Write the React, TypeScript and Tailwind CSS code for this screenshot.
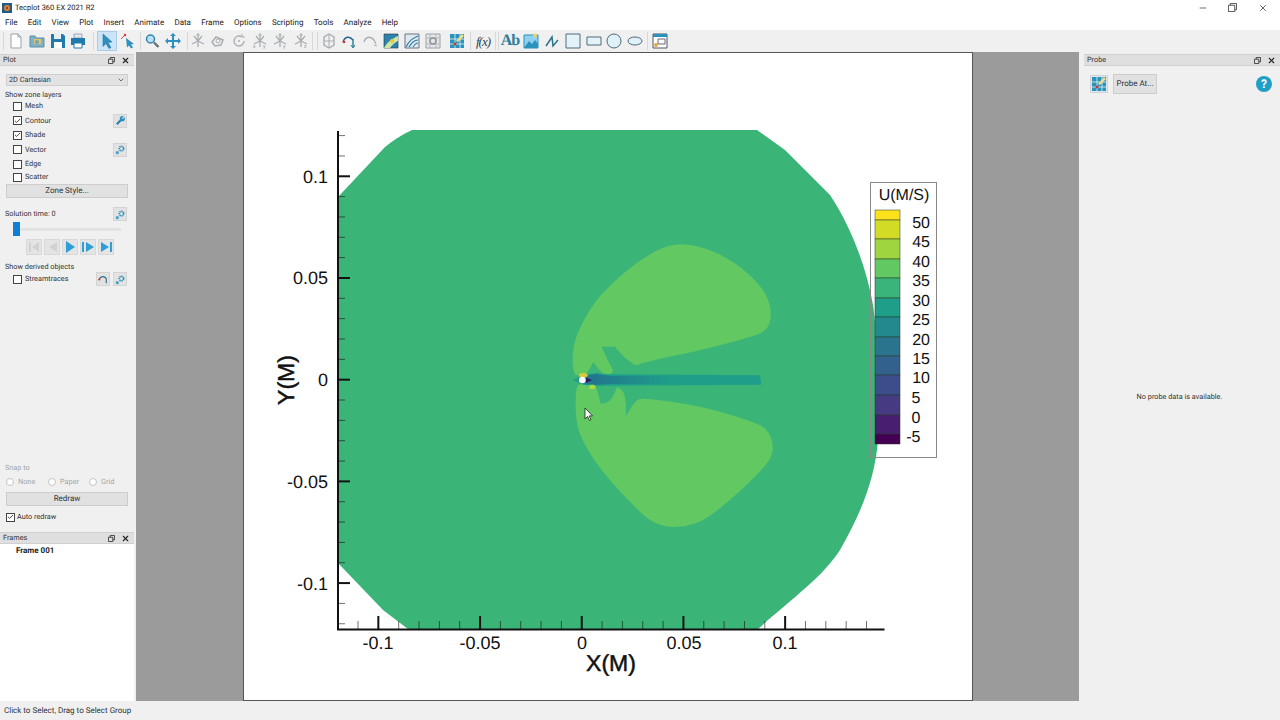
import { Minus, X, ChevronDown, Check } from 'lucide-react';

const MENUS = ['File', 'Edit', 'View', 'Plot', 'Insert', 'Animate', 'Data', 'Frame', 'Options', 'Scripting', 'Tools', 'Analyze', 'Help'];

const LEGEND = [
  { label: '50', color: '#fde11d', h: 10, x: 930 },
  { label: '45', color: '#d2dc27', h: 19, x: 930 },
  { label: '40', color: '#9fd53f', h: 20, x: 930 },
  { label: '35', color: '#62c862', h: 19, x: 930 },
  { label: '30', color: '#3ab47a', h: 20, x: 930 },
  { label: '25', color: '#1f9e89', h: 19, x: 930 },
  { label: '20', color: '#23898e', h: 20, x: 930 },
  { label: '15', color: '#2b748e', h: 19, x: 930 },
  { label: '10', color: '#33618d', h: 19, x: 930 },
  { label: '5', color: '#3b4e8b', h: 20, x: 920.5 },
  { label: '0', color: '#463a83', h: 20, x: 920.5 },
  { label: '-5', color: '#481f70', h: 19, x: 920.5 },
  { label: '', color: '#440154', h: 10, x: 0 },
];

const XMAJOR = [378.3, 480, 581.7, 683.4, 785];
const YMAJOR = [176.5, 278.2, 380, 481.7, 583.4];
const range = (count: number) => Array.from({ length: count }, (_, i) => i);

// closed curve through the midpoints of a point list; a doubled point gives a sharper corner
const smooth = (pts: number[][]) => {
  const mid = (a: number[], b: number[]) => `${(a[0] + b[0]) / 2} ${(a[1] + b[1]) / 2}`;
  let d = `M${mid(pts[pts.length - 1], pts[0])}`;
  pts.forEach((p, i) => {
    d += `Q${p[0]} ${p[1]} ${mid(p, pts[(i + 1) % pts.length])}`;
  });
  return d + 'Z';
};

const UPPER_LOBE = [
  [42, 436], [36, 385], [46, 320], [92, 232], [148, 166], [238, 90], [335, 38], [432, 50], [524, 96], [604, 166],
  [636, 235], [626, 300], [570, 322], [400, 366], [300, 385], [226, 406], [226, 406], [195, 385], [165, 350], [165, 350],
  [125, 350], [125, 350], [145, 395], [165, 430], [128, 434], [100, 395], [100, 395], [82, 432], [60, 436],
];
const LOWER_LOBE = [
  [48, 470], [46, 560], [62, 625], [118, 715], [198, 805], [288, 892], [402, 890], [484, 834], [574, 752], [630, 692],
  [642, 650], [624, 596], [560, 568], [420, 528], [248, 503], [226, 512], [198, 558], [198, 558], [196, 488], [172, 472],
  [172, 472], [150, 516], [122, 522], [122, 522], [110, 470], [90, 462], [60, 462],
];

// every toolbar drawing sits in a 16x16 box
const Glyph = ({ children }: { children: React.ReactNode }) => (
  <svg viewBox="0 0 16 16" className="w-4 h-4" fill="none">{children}</svg>
);

const Axes = ({ a, b }: { a: string; b?: string }) => (
  <Glyph>
    <path d="M8 8V1M8 8l6 3M8 8l-6 3M8 8l-4-5M8 8l4-5M8 8v6" stroke="#a9aeb2" strokeWidth="1.3" />
    <path d="M6.5 2.5L8 .5l1.5 2" stroke="#a9aeb2" />
    <text x="1" y="15" fontSize="5" fill="#8b9094">{a}</text>
    {b && <text x="11" y="15" fontSize="5" fill="#8b9094">{b}</text>}
  </Glyph>
);

const PROBE = (
  <Glyph>
    <path d="M1 1h14v14H1z" fill="#2a92bb" />
    <path d="M1 6h14M1 11h14M6 1v14M11 1v14" stroke="#e9f4f8" strokeWidth=".8" />
    <path d="M7 8l6-7 2 2-6 6z" fill="#efe08a" />
    <circle cx="6" cy="11" r="1.4" fill="#c33" />
  </Glyph>
);

type Tool = { x: number; w?: number; node?: React.ReactNode; active?: boolean };

// x is the centre of the item in the toolbar; items without a node are separators
const TOOLS: Tool[] = [
  { x: 3, w: 1 },
  { x: 16, node: <Glyph><path d="M3 1h7l3 3v11H3z" fill="#fff" stroke="#9aa3ab" /><path d="M10 1v3h3" stroke="#9aa3ab" /></Glyph> },
  { x: 37, node: <Glyph><path d="M1 3h5l1 2h8v9H1z" fill="#7fb2c9" stroke="#5b8ea5" /><path d="M5 6h7v5H5z" fill="#e5c266" /><circle cx="8" cy="9" r="2" fill="#6fa5c0" /></Glyph> },
  { x: 58, node: <Glyph><path d="M1 1h12l2 2v12H1z" fill="#1e7bab" /><path d="M4 1h7v5H4z" fill="#e6eef3" /><path d="M4 9h8v6H4z" fill="#fff" /></Glyph> },
  { x: 78, node: <Glyph><path d="M4 1h8v4H4z" fill="#dfe7ec" stroke="#668" strokeWidth=".5" /><path d="M1 5h14v7H1z" fill="#1e7bab" /><path d="M4 10h8v5H4z" fill="#fff" stroke="#1e7bab" /></Glyph> },
  { x: 93, w: 1 },
  { x: 107, active: true, node: <Glyph><path d="M4 1l9 8-4 .5 3 5-2 1-3-5-3 3z" fill="#2e8fc0" stroke="#1d6f99" strokeWidth=".5" /></Glyph> },
  { x: 128, node: <Glyph><path d="M6 5l8 6-3 .5 2 3-2 1-2-3-2 2z" fill="#2e8fc0" /><path d="M1 6l4-4" stroke="#c9506a" strokeWidth="1" /><circle cx="5" cy="2" r="1.2" fill="#d33" /></Glyph> },
  { x: 140, w: 1 },
  { x: 152, node: <Glyph><circle cx="6.5" cy="6" r="4" fill="#bfe0f0" stroke="#2c86b3" strokeWidth="1.5" /><path d="M10 9.5l4.5 4.5" stroke="#6a6f73" strokeWidth="2.4" /></Glyph> },
  { x: 173, node: <Glyph><path d="M8 0l3 3H9v4h4V5l3 3-3 3V9H9v4h2l-3 3-3-3h2V9H3v2L0 8l3-3v2h4V3H5z" fill="#2e8fc0" /></Glyph> },
  { x: 187, w: 1 },
  { x: 198, node: <Axes a="" /> },
  { x: 218, node: <Glyph><path d="M2 9l4-5 7 3-2 5-6 1z" stroke="#a9aeb2" strokeWidth="1.5" /><circle cx="8" cy="8" r="2" stroke="#a9aeb2" /></Glyph> },
  { x: 239, node: <Glyph><path d="M13 8a5 5 0 1 1-2-4" stroke="#a9aeb2" strokeWidth="1.4" /><path d="M11 1v3h3" stroke="#a9aeb2" /><circle cx="8" cy="8" r="1" fill="#a9aeb2" /></Glyph> },
  { x: 260, node: <Axes a="x" b="y" /> },
  { x: 280, node: <Axes a="" b="y" /> },
  { x: 301, node: <Axes a="" b="z" /> },
  { x: 312, w: 1 },
  { x: 317, w: 1 },
  { x: 329, node: <Glyph><path d="M8 1l5 3v8l-5 3-5-3V4z" stroke="#a9aeb2" strokeWidth="1.4" /><path d="M8 1v14M3 8h10" stroke="#a9aeb2" /></Glyph> },
  { x: 350, node: <Glyph><path d="M1 9c2-6 7-6 10-2" stroke="#27668a" strokeWidth="1.4" /><path d="M11 6v8" stroke="#1e7f8f" strokeWidth="1.4" /><path d="M9 12l2 3 2-3" stroke="#1e7f8f" /><circle cx="2" cy="9" r="1.3" fill="#d33" /></Glyph> },
  { x: 371, node: <Glyph><path d="M1 9c2-6 7-6 10-2l2 4" stroke="#a9aeb2" strokeWidth="1.4" /><path d="M11 12l3 1" stroke="#a9aeb2" /></Glyph> },
  { x: 391, node: <Glyph><path d="M1 1h14v14H1z" fill="#2b83ad" stroke="#234" strokeWidth=".6" /><path d="M1 15C5 8 9 6 15 3v5c-4 2-6 4-8 7z" fill="#cfe6a5" /><circle cx="9" cy="8" r="2" fill="#e9c93d" /></Glyph> },
  { x: 412, node: <Glyph><path d="M1 1h14v14H1z" fill="#dfe8ee" stroke="#345" strokeWidth=".7" /><path d="M2 14C6 6 10 5 14 3M5 14c3-5 6-7 9-7M9 14c2-3 3-4 5-4" stroke="#2b7ba6" strokeWidth="1.1" /></Glyph> },
  { x: 433, node: <Glyph><path d="M1 1h14v14H1z" stroke="#9ca2a6" fill="#e4e6e8" /><path d="M1 5h14M1 11h14M5 1v14M11 1v14" stroke="#b5babd" /><circle cx="8" cy="8" r="3" stroke="#8d9396" strokeWidth="1.4" /></Glyph> },
  { x: 457, node: PROBE },
  { x: 470, w: 1 },
  { x: 483, node: <span className="font-['Liberation_Serif',serif] italic text-[13px] text-[#345] leading-none whitespace-nowrap tracking-[-1px]">f(x)</span> },
  { x: 495, w: 1 },
  { x: 498, w: 1 },
  { x: 510, node: <span className="font-['Liberation_Serif',serif] font-bold text-[16px] text-[#2a7d9c] leading-none tracking-[-1px]">Ab</span> },
  { x: 531, node: <Glyph><path d="M1 2h14v13H1z" fill="#8fd0ee" stroke="#2b91bd" /><path d="M1 15l5-7 3 3 3-4 3 4v4z" fill="#2b91bd" /><circle cx="12" cy="2.5" r="2" fill="#e9d65c" /></Glyph> },
  { x: 552, node: <Glyph><path d="M2 13l6-9 1 9 5-6" stroke="#2a7287" strokeWidth="1.5" /></Glyph> },
  { x: 573, node: <Glyph><path d="M1 1h14v14H1z" fill="#e4f2f9" stroke="#4e6b78" strokeWidth="1" /></Glyph> },
  { x: 594, node: <Glyph><path d="M1 4h14v8H1z" fill="#e4f2f9" stroke="#4e6b78" strokeWidth="1" /></Glyph> },
  { x: 614, node: <Glyph><circle cx="8" cy="8" r="7" fill="#e0f1f9" stroke="#4e6b78" /></Glyph> },
  { x: 635, node: <Glyph><ellipse cx="8" cy="8" rx="7" ry="4" fill="#e0f1f9" stroke="#4e6b78" /></Glyph> },
  { x: 647, w: 1 },
  { x: 660, node: <Glyph><path d="M1 1h14v14H1z" fill="#fff" stroke="#556" /><path d="M1 1h14v3H1z" fill="#2a92bb" /><path d="M6 6h7v5H6z" stroke="#667" /><circle cx="4" cy="12" r="2" fill="#e3a93c" /></Glyph> },
];

const Toolbar = () => {
  let right = 0;
  return (
    <div className="h-[22px] flex items-center bg-[#f0f0f0]">
      {TOOLS.map(t => {
        const w = t.w ?? 20;
        const left = t.x - w / 2;
        const gap = left - right;
        right = left + w;
        return (
          <div
            key={t.x}
            style={{ marginLeft: gap, width: w }}
            className={`shrink-0 flex items-center justify-center ${t.node ? 'h-[20px]' : 'h-[18px] bg-[#d8d8d8]'} ${t.active ? 'bg-[#cce4f7] border border-[#a8cde8]' : ''}`}
          >
            {t.node}
          </div>
        );
      })}
    </div>
  );
};

const DockTitle = ({ title }: { title: string }) => (
  <div className="h-[12px] bg-[#dfdfdf] border-y border-[#d0d0d0] flex items-center pl-[3px] pr-[4px] text-[#333]">
    <span className="flex-1">{title}</span>
    <svg viewBox="0 0 8 8" className="w-[7px] h-[7px] mr-[6px]" fill="none" stroke="#333"><path d="M.5 2.5h5v5h-5zM2.5 2.5v-2h5v5h-2" /></svg>
    <X className="w-[9px] h-[9px] text-[#222]" strokeWidth={3} />
  </div>
);

const CheckRow = ({ label, on, h, children }: { label: string; on?: boolean; h: number; children?: React.ReactNode }) => (
  <div style={{ height: h }} className="flex items-center pl-[13px] pr-[7px]">
    <div className="w-[9px] h-[9px] bg-white border border-[#444] flex items-center justify-center">
      {on && <Check className="w-[8px] h-[8px] text-[#333]" strokeWidth={3} />}
    </div>
    <span className="ml-[3px] flex-1 text-[#333]">{label}</span>
    {children}
  </div>
);

const Gear = ({ wrench }: { wrench?: boolean }) => (
  <div className="w-[14px] h-[14px] bg-[#e2e2e2] border border-[#d4d4d4] flex items-center justify-center">
    <svg viewBox="0 0 12 12" className="w-[11px] h-[11px]" fill="none">
      {wrench ? (
        <>
          <path d="M2 10l5-5" stroke="#1f7fb0" strokeWidth="2.2" />
          <circle cx="8" cy="4" r="2.8" fill="#2f8fc0" />
          <path d="M8 4l3-3" stroke="#e2e2e2" strokeWidth="1.4" />
        </>
      ) : (
        <>
          <circle cx="7" cy="5" r="2.4" stroke="#2b93bb" strokeWidth="1.8" strokeDasharray="1.4 .6" />
          <circle cx="2.5" cy="9.5" r="1.8" fill="#4aa2c7" />
        </>
      )}
    </svg>
  </div>
);

const Player = ({ d, dim }: { d: string; dim?: boolean }) => (
  <div className="w-[16px] h-[16px] bg-[#e4e4e4] border border-[#d8d8d8] flex items-center justify-center">
    <svg viewBox="0 0 14 14" className="w-[14px] h-[14px]"><path d={d} fill={dim ? '#cfd2d4' : '#2e9ed6'} /></svg>
  </div>
);

const Radio = ({ label, w }: { label: string; w: number }) => (
  <div style={{ width: w }} className="flex items-center text-[#a4a4a4]">
    <span className="w-[8px] h-[8px] rounded-full bg-white border border-[#c4c4c4] mr-[4px]" />
    {label}
  </div>
);

const PlotPanel = () => (
  <div className="h-[479px] pt-[2px] flex flex-col">
    <DockTitle title="Plot" />
    <div className="mt-[8px] mx-[6px] h-[12px] bg-[#e2e2e2] border border-[#cfcfcf] flex items-center pl-[2px] pr-[2px] text-[#333]">
      <span className="flex-1">2D Cartesian</span>
      <ChevronDown className="w-[8px] h-[8px]" />
    </div>
    <div className="ml-[5px] mt-[4px] h-[9px] leading-[9px] text-[#333]">Show zone layers</div>
    <CheckRow label="Mesh" h={14} />
    <CheckRow label="Contour" on h={15}><Gear wrench /></CheckRow>
    <CheckRow label="Shade" on h={14} />
    <CheckRow label="Vector" h={15}><Gear /></CheckRow>
    <CheckRow label="Edge" h={14} />
    <CheckRow label="Scatter" h={12} />
    <div className="mt-[1px] mx-[6px] h-[14px] bg-[#e1e1e1] border border-[#cdcdcd] flex items-center justify-center text-[#333] text-[8px]">Zone Style...</div>
    <div className="mt-[9px] flex items-center pl-[5px] pr-[7px] h-[14px] text-[#333]">
      <span className="flex-1">Solution time: 0</span>
      <Gear />
    </div>
    <div className="relative mt-[1px] mx-[13px] h-[14px] flex items-center">
      <div className="w-full h-[3px] bg-[#e3e3e3]" />
      <div className="absolute left-0 top-0 w-[7px] h-[14px] bg-[#0f7fd6]" />
    </div>
    <div className="mt-[3px] ml-[26px] flex gap-[2px]">
      <Player dim d="M2 2h2v10H2zM12 2v10L5 7z" />
      <Player dim d="M12 2v10L4 7z" />
      <Player d="M3 1l9 6-9 6z" />
      <Player d="M1 2h2v10H1zM5 2l8 5-8 5z" />
      <Player d="M2 2l8 5-8 5zM11 2h2v10h-2z" />
    </div>
    <div className="ml-[5px] mt-[6px] h-[11px] leading-[11px] text-[#333]">Show derived objects</div>
    <CheckRow label="Streamtraces" h={14}>
      <div className="w-[14px] h-[14px] bg-[#e2e2e2] border border-[#d4d4d4] mr-[3px] flex items-center justify-center">
        <svg viewBox="0 0 12 12" className="w-[11px] h-[11px]" fill="none"><path d="M1 6c2-4 6-4 8-1v5" stroke="#2a6b80" strokeWidth="1.2" /><circle cx="1.5" cy="6" r="1.2" fill="#c33" /></svg>
      </div>
      <Gear />
    </CheckRow>
    <div className="flex-1" />
    <div className="ml-[5px] h-[11px] leading-[11px] text-[#a4a4a4]">Snap to</div>
    <div className="mt-[3px] ml-[6px] h-[12px] flex">
      <Radio label="None" w={42} />
      <Radio label="Paper" w={41} />
      <Radio label="Grid" w={40} />
    </div>
    <div className="mt-[4px] mx-[6px] h-[14px] bg-[#e1e1e1] border border-[#cdcdcd] flex items-center justify-center text-[#333] text-[8px]">Redraw</div>
    <div className="mt-[4px] mb-[7px] h-[14px] flex items-center pl-[6px] text-[#333]">
      <div className="w-[9px] h-[9px] bg-white border border-[#444] flex items-center justify-center mr-[2px]">
        <Check className="w-[8px] h-[8px]" strokeWidth={3} />
      </div>
      Auto redraw
    </div>
  </div>
);

const Plot = () => (
  <svg viewBox="243 52 730 649" className="w-[730px] h-[649px] font-['Liberation_Sans',sans-serif]">
    <defs>
      <linearGradient id="wake" x1="0" x2="1" y1="0" y2="0">
        <stop offset="0" stopColor="#22708e" />
        <stop offset="1" stopColor="#1f9e89" />
      </linearGradient>
    </defs>
    <path d="M338 197L385 147Q397 137 412 130H757L785 150L830 195C850 225 866 265 873 305C878 340 880 400 878 440C875 480 860 515 840 550C822 578 790 600 758 629H408L383 610L338 563Z" fill="#3bb577" />
    {/* wake region, coordinates taken from a 3x crop */}
    <g transform="translate(560 230) scale(.3333)">
      <path d={smooth(UPPER_LOBE)} fill="#62c862" />
      <path d={smooth(LOWER_LOBE)} fill="#62c862" />
      <path d="M38 450L70 436L110 428L130 433L600 436L604 464L130 467L100 468L70 464Z" fill="#1f9e89" />
      <path d="M60 438L110 432L150 438H330V462H150L110 464L60 460Z" fill="url(#wake)" />
      <path d="M78 443L96 450L78 458Z" fill="#2a1a60" />
      <ellipse cx="70" cy="436" rx="13" ry="7" fill="#d8c83a" />
      <ellipse cx="97" cy="471" rx="10" ry="7" fill="#a8d845" />
      <circle cx="67" cy="450" r="10" fill="#fff" />
    </g>

    <g stroke="#111" fill="none">
      <path d="M338 131V630M337 629.5H884.5" strokeWidth="2" />
      {range(25).map(i => {
        const y = 135.6 + i * 20.34;
        const major = YMAJOR.some(m => Math.abs(m - y) < 3);
        return <path key={i} d={`M338 ${y}H${major ? 350 : 345}`} strokeWidth={major ? 2 : 1} strokeOpacity={major ? 1 : 0.6} />;
      })}
      {range(26).map(i => {
        const x = 358 + i * 20.34;
        const major = XMAJOR.some(m => Math.abs(m - x) < 3);
        return <path key={i} d={`M${x} 629V${major ? 616 : 621}`} strokeWidth={major ? 2 : 1} strokeOpacity={major ? 1 : 0.6} />;
      })}
    </g>

    <g fill="#111" fontSize="18" textAnchor="end">
      <text x="328" y="182.5">0.1</text>
      <text x="328" y="284">0.05</text>
      <text x="328" y="386">0</text>
      <text x="328" y="488">-0.05</text>
      <text x="328" y="590">-0.1</text>
    </g>
    <g fill="#111" fontSize="18" textAnchor="middle">
      <text x="378" y="648.5">-0.1</text>
      <text x="480" y="648.5">-0.05</text>
      <text x="582" y="648.5">0</text>
      <text x="684" y="648.5">0.05</text>
      <text x="785" y="648.5">0.1</text>
    </g>
    <text x="611" y="671" fontSize="23" fill="#111" stroke="#111" strokeWidth=".5" textAnchor="middle">X(M)</text>
    <text transform="translate(294 380) rotate(-90)" fontSize="23" fill="#111" stroke="#111" strokeWidth=".5" textAnchor="middle">Y(M)</text>

    <rect x="870.5" y="182.5" width="66" height="275" fill="none" stroke="#888" />
    <text x="904" y="200" fontSize="16" fill="#111" textAnchor="middle">U(M/S)</text>
    {LEGEND.reduce<{ y: number; els: React.ReactNode[] }>((acc, b) => {
      acc.els.push(<rect key={b.color} x="875" y={acc.y} width="25" height={b.h} fill={b.color} stroke="#2b3a2b" strokeWidth=".5" />);
      if (b.label) {
        acc.els.push(<text key={b.label} x={b.x} y={acc.y + b.h + 7.5} fontSize="16" fill="#111" textAnchor="end">{b.label}</text>);
      }
      acc.y += b.h;
      return acc;
    }, { y: 210, els: [] }).els}

    <path d="M585 408v11l2.5-2.5 2 4 1.5-.8-2-3.8h3.5z" fill="#fff" stroke="#222" strokeWidth=".8" />
  </svg>
);

export default function App() {
  return (
    <div className="w-[1280px] h-[720px] overflow-hidden flex flex-col bg-[#f0f0f0] text-[7.3px] leading-none font-['Roboto',sans-serif] [text-rendering:geometricPrecision]">
      <div className="h-[15px] bg-white flex items-center pl-[2px] text-[#222] text-[7.5px]">
        <svg viewBox="0 0 10 10" className="w-[10px] h-[10px] mr-[3px]">
          <rect width="10" height="10" fill="#1f5d86" />
          <circle cx="5" cy="5" r="3" fill="#e08a2c" />
          <circle cx="5" cy="5" r="1.3" fill="#b5302a" />
        </svg>
        <span className="flex-1">Tecplot 360 EX 2021 R2</span>
        <Minus className="w-[10px] h-[10px] mr-[20px] text-[#555]" />
        <svg viewBox="0 0 10 10" className="w-[9px] h-[9px] mr-[21px]" fill="none" stroke="#444"><path d="M.5 2.5h7v7h-7zM2.5 2.5v-2h7v7h-2" /></svg>
        <X className="w-[10px] h-[10px] mr-[12px] text-[#444]" />
      </div>
      <div className="h-[15px] bg-white flex items-center pl-[5px] gap-[10.25px] text-[#222] text-[8px]">
        {MENUS.map(m => <span key={m}>{m}</span>)}
      </div>
      <Toolbar />
      <div className="flex h-[649px]">
        <div className="w-[134px] flex flex-col">
          <PlotPanel />
          <div className="flex-1 pt-[1px] flex flex-col">
            <DockTitle title="Frames" />
            <div className="flex-1 bg-white pl-[16px] pt-[3px] font-bold text-[#222] text-[8px]">Frame 001</div>
          </div>
        </div>
        <div className="w-[2px]" />
        <div className="w-[107px] bg-[#9b9b9b]" />
        <div className="w-[730px] bg-white shadow-[inset_1px_1px_0_#555,inset_-1px_-1px_0_#555]"><Plot /></div>
        <div className="w-[106px] bg-[#9b9b9b]" />
        <div className="flex-1 pl-[5px] pt-[2px] flex flex-col">
          <DockTitle title="Probe" />
          <div className="flex items-center mt-[8px] pl-[6px] pr-[8px]">
            <div className="w-[18px] h-[18px] bg-[#dfe6ea] border border-[#cfd4d8] flex items-center justify-center">
              {PROBE}
            </div>
            <div className="ml-[5px] w-[44px] h-[20px] bg-[#e1e1e1] border border-[#cdcdcd] flex items-center justify-center text-[#333] text-[8px]">Probe At...</div>
            <div className="flex-1" />
            <div className="w-[16px] h-[16px] rounded-full bg-[#1f9fc6] flex items-center justify-center text-white font-bold text-[12px]">?</div>
          </div>
          <div className="mt-[299px] pr-[5px] text-center text-[#333]">No probe data is available.</div>
        </div>
      </div>
      <div className="flex-1 flex items-center pl-[4px] text-[#333] text-[8px] bg-[#f0f0f0]">Click to Select, Drag to Select Group</div>
    </div>
  );
}
